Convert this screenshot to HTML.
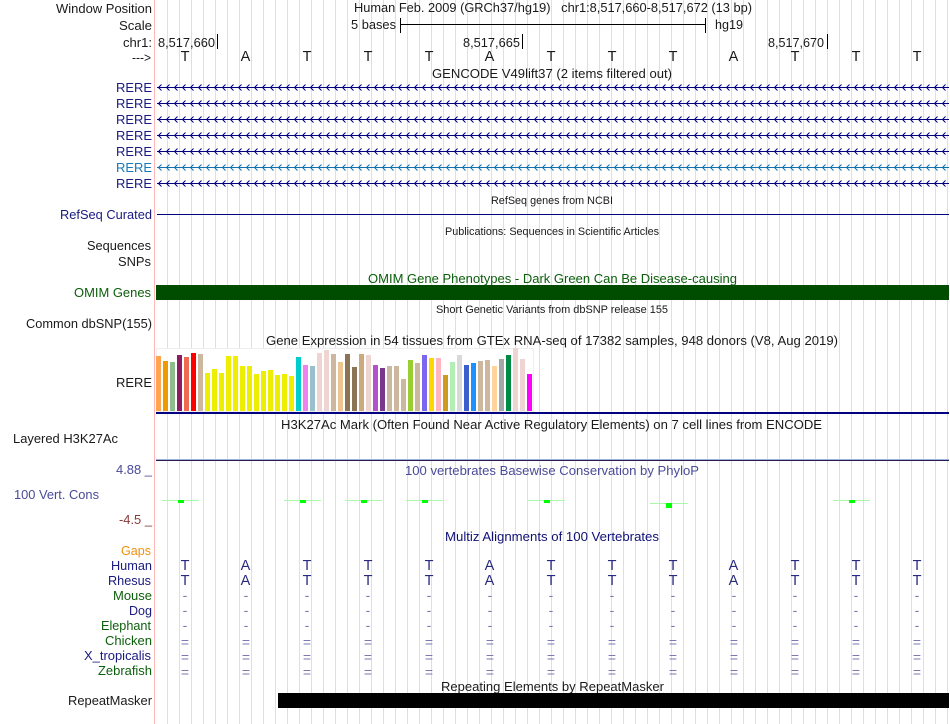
<!DOCTYPE html>
<html><head><meta charset="utf-8"><title>Genome Browser</title>
<style>
html,body{margin:0;padding:0;background:#fff;width:950px;height:724px;overflow:hidden;position:relative}
#grid{position:absolute;left:167px;top:0;width:783px;height:724px;background-image:linear-gradient(to right,#dcdcf5 1px,transparent 1px);background-size:12px 100%;background-repeat:repeat-x}
svg{display:block;position:absolute;left:0;top:0}
text{font-family:"Liberation Sans",sans-serif;font-size:13px;fill:#1a1a1a}
.s{font-size:11px}
.b{fill:#1a1a80}
.g{fill:#0b5e0b}
.l{font-size:14.5px;text-anchor:middle}
.n{font-size:14.5px;text-anchor:middle;fill:#2a2a80}
.d{font-size:14px;text-anchor:middle;fill:#7a7ab0}
</style></head><body>
<div id="grid"></div>
<svg width="950" height="724" viewBox="0 0 950 724" xmlns="http://www.w3.org/2000/svg">
<defs>
<pattern id="ch" x="158" y="84" width="8" height="16" patternUnits="userSpaceOnUse"><path d="M3.5 0.5L0.5 3.5L3.5 6.5" fill="none" stroke="#000080" stroke-width="1"/></pattern>
<pattern id="ch2" x="158" y="164" width="8" height="16" patternUnits="userSpaceOnUse"><path d="M3.5 0.5L0.5 3.5L3.5 6.5" fill="none" stroke="#1070b0" stroke-width="1"/></pattern>
</defs>
<rect x="154" y="0" width="1" height="724" fill="#ffb6b6"/>

<text x="56" y="13" textLength="96" lengthAdjust="spacingAndGlyphs">Window Position</text>
<text x="119" y="30" textLength="33" lengthAdjust="spacingAndGlyphs">Scale</text>
<text x="123" y="47" textLength="29" lengthAdjust="spacingAndGlyphs">chr1:</text>
<text x="132" y="62" textLength="19" lengthAdjust="spacingAndGlyphs">---&gt;</text>
<text x="354" y="12" xml:space="preserve" textLength="398" lengthAdjust="spacingAndGlyphs">Human Feb. 2009 (GRCh37/hg19)   chr1:8,517,660-8,517,672 (13 bp)</text>
<text x="351" y="29" textLength="45" lengthAdjust="spacingAndGlyphs">5 bases</text>
<text x="715" y="29" textLength="28" lengthAdjust="spacingAndGlyphs">hg19</text>
<rect x="400" y="24" width="306" height="1" fill="#000"/>
<rect x="400" y="18" width="1" height="15" fill="#000"/>
<rect x="705" y="18" width="1" height="15" fill="#000"/>
<text x="158" y="47" textLength="57" lengthAdjust="spacingAndGlyphs">8,517,660</text>
<rect x="217" y="34" width="1" height="15" fill="#000"/>
<text x="463" y="47" textLength="57" lengthAdjust="spacingAndGlyphs">8,517,665</text>
<rect x="522" y="34" width="1" height="15" fill="#000"/>
<text x="768" y="47" textLength="56" lengthAdjust="spacingAndGlyphs">8,517,670</text>
<rect x="827" y="34" width="1" height="15" fill="#000"/>

<text class="l" x="185" y="61">T</text><text class="l" x="245.500" y="61">A</text><text class="l" x="307" y="61">T</text><text class="l" x="368" y="61">T</text><text class="l" x="429" y="61">T</text><text class="l" x="489.500" y="61">A</text><text class="l" x="551" y="61">T</text><text class="l" x="612" y="61">T</text><text class="l" x="673" y="61">T</text><text class="l" x="733.500" y="61">A</text><text class="l" x="795" y="61">T</text><text class="l" x="856" y="61">T</text><text class="l" x="917" y="61">T</text>

<text x="432" y="78" textLength="240" lengthAdjust="spacingAndGlyphs">GENCODE V49lift37 (2 items filtered out)</text>

<text class="b" x="116" y="92" textLength="36" lengthAdjust="spacingAndGlyphs">RERE</text>
<text class="b" x="116" y="108" textLength="36" lengthAdjust="spacingAndGlyphs">RERE</text>
<text class="b" x="116" y="124" textLength="36" lengthAdjust="spacingAndGlyphs">RERE</text>
<text class="b" x="116" y="140" textLength="36" lengthAdjust="spacingAndGlyphs">RERE</text>
<text class="b" x="116" y="156" textLength="36" lengthAdjust="spacingAndGlyphs">RERE</text>
<text x="116" y="172" textLength="36" lengthAdjust="spacingAndGlyphs" style="fill:#1878b8">RERE</text>
<text class="b" x="116" y="188" textLength="36" lengthAdjust="spacingAndGlyphs">RERE</text>

<rect x="157" y="87" width="792" height="1" fill="#000080"/>
<rect x="157" y="103" width="792" height="1" fill="#000080"/>
<rect x="157" y="119" width="792" height="1" fill="#000080"/>
<rect x="157" y="135" width="792" height="1" fill="#000080"/>
<rect x="157" y="151" width="792" height="1" fill="#000080"/>
<rect x="157" y="167" width="792" height="1" fill="#1070b0"/>
<rect x="157" y="183" width="792" height="1" fill="#000080"/>
<rect x="158" y="84" width="790" height="71" fill="url(#ch)"/>
<rect x="158" y="164" width="790" height="7" fill="url(#ch2)"/>
<rect x="158" y="180" width="790" height="7" fill="url(#ch)"/>

<text class="s" x="491" y="204" textLength="122" lengthAdjust="spacingAndGlyphs">RefSeq genes from NCBI</text>
<text class="b" x="60" y="219" textLength="92" lengthAdjust="spacingAndGlyphs">RefSeq Curated</text>
<rect x="157" y="214" width="792" height="1" fill="#000080"/>
<text class="s" x="445" y="235" textLength="214" lengthAdjust="spacingAndGlyphs">Publications: Sequences in Scientific Articles</text>
<text x="87" y="250" textLength="64" lengthAdjust="spacingAndGlyphs">Sequences</text>
<text x="118" y="266" textLength="33" lengthAdjust="spacingAndGlyphs">SNPs</text>
<text class="g" x="368" y="283" textLength="369" lengthAdjust="spacingAndGlyphs">OMIM Gene Phenotypes - Dark Green Can Be Disease-causing</text>
<text class="g" x="74" y="297" textLength="77" lengthAdjust="spacingAndGlyphs">OMIM Genes</text>
<rect x="156" y="285" width="793" height="15" fill="#004d00"/>
<text class="s" x="436" y="313" textLength="232" lengthAdjust="spacingAndGlyphs">Short Genetic Variants from dbSNP release 155</text>
<text x="26" y="328" textLength="126" lengthAdjust="spacingAndGlyphs">Common dbSNP(155)</text>
<text x="266" y="345" textLength="572" lengthAdjust="spacingAndGlyphs">Gene Expression in 54 tissues from GTEx RNA-seq of 17382 samples, 948 donors (V8, Aug 2019)</text>
<text x="116" y="387" textLength="36" lengthAdjust="spacingAndGlyphs">RERE</text>

<rect x="156.500" y="348.500" width="377" height="63" fill="#fff" stroke="#eeeeee"/>
<g>
<rect x="156" y="356" width="5" height="55" fill="#FFA54F"/>
<rect x="163" y="361" width="5" height="50" fill="#EE9A00"/>
<rect x="170" y="362" width="5" height="49" fill="#8FBC8F"/>
<rect x="177" y="355" width="5" height="56" fill="#8B1C62"/>
<rect x="184" y="357" width="5" height="54" fill="#EE6A50"/>
<rect x="191" y="353" width="5" height="58" fill="#FF0000"/>
<rect x="198" y="354" width="5" height="57" fill="#CDB79E"/>
<rect x="205" y="373" width="5" height="38" fill="#EEEE00"/>
<rect x="212" y="369" width="5" height="42" fill="#EEEE00"/>
<rect x="219" y="373" width="5" height="38" fill="#EEEE00"/>
<rect x="226" y="356" width="5" height="55" fill="#EEEE00"/>
<rect x="233" y="356" width="5" height="55" fill="#EEEE00"/>
<rect x="240" y="366" width="5" height="45" fill="#EEEE00"/>
<rect x="247" y="366" width="5" height="45" fill="#EEEE00"/>
<rect x="254" y="374" width="5" height="37" fill="#EEEE00"/>
<rect x="261" y="371" width="5" height="40" fill="#EEEE00"/>
<rect x="268" y="370" width="5" height="41" fill="#EEEE00"/>
<rect x="275" y="375" width="5" height="36" fill="#EEEE00"/>
<rect x="282" y="374" width="5" height="37" fill="#EEEE00"/>
<rect x="289" y="376" width="5" height="35" fill="#EEEE00"/>
<rect x="296" y="357" width="5" height="54" fill="#00CDCD"/>
<rect x="303" y="365" width="5" height="46" fill="#EE82EE"/>
<rect x="310" y="366" width="5" height="45" fill="#9AC0CD"/>
<rect x="317" y="353" width="5" height="58" fill="#EED5D2"/>
<rect x="324" y="350" width="5" height="61" fill="#EED5D2"/>
<rect x="331" y="354" width="5" height="57" fill="#CDB79E"/>
<rect x="338" y="362" width="5" height="49" fill="#EEC591"/>
<rect x="345" y="354" width="5" height="57" fill="#8B7355"/>
<rect x="352" y="367" width="5" height="44" fill="#8B7355"/>
<rect x="359" y="354" width="5" height="57" fill="#CDAA7D"/>
<rect x="366" y="355" width="5" height="56" fill="#EED5D2"/>
<rect x="373" y="365" width="5" height="46" fill="#B452CD"/>
<rect x="380" y="368" width="5" height="43" fill="#7A378B"/>
<rect x="387" y="366" width="5" height="45" fill="#CDB79E"/>
<rect x="394" y="366" width="5" height="45" fill="#CDB79E"/>
<rect x="401" y="379" width="5" height="32" fill="#CDB79E"/>
<rect x="408" y="360" width="5" height="51" fill="#9ACD32"/>
<rect x="415" y="363" width="5" height="48" fill="#CDB79E"/>
<rect x="422" y="355" width="5" height="56" fill="#7A67EE"/>
<rect x="429" y="358" width="5" height="53" fill="#FFD700"/>
<rect x="436" y="358" width="5" height="53" fill="#FFB6C1"/>
<rect x="443" y="375" width="5" height="36" fill="#CD9B1D"/>
<rect x="450" y="362" width="5" height="49" fill="#B4EEB4"/>
<rect x="457" y="355" width="5" height="56" fill="#D9D9D9"/>
<rect x="464" y="365" width="5" height="46" fill="#3A5FCD"/>
<rect x="471" y="363" width="5" height="48" fill="#1E90FF"/>
<rect x="478" y="361" width="5" height="50" fill="#CDB79E"/>
<rect x="485" y="360" width="5" height="51" fill="#CDB79E"/>
<rect x="492" y="366" width="5" height="45" fill="#FFD39B"/>
<rect x="499" y="359" width="5" height="52" fill="#A6A6A6"/>
<rect x="506" y="355" width="5" height="56" fill="#008B45"/>
<rect x="513" y="348" width="5" height="63" fill="#EED5D2"/>
<rect x="520" y="359" width="5" height="52" fill="#EED5D2"/>
<rect x="527" y="374" width="5" height="37" fill="#FF00FF"/>
</g>
<rect x="156" y="412" width="793" height="2" fill="#000080"/>

<text x="281" y="429" textLength="541" lengthAdjust="spacingAndGlyphs">H3K27Ac Mark (Often Found Near Active Regulatory Elements) on 7 cell lines from ENCODE</text>
<text x="13" y="443" textLength="105" lengthAdjust="spacingAndGlyphs">Layered H3K27Ac</text>
<rect x="156" y="459" width="793" height="1" fill="#9ab4dc"/>
<rect x="156" y="460" width="793" height="1" fill="#2d1b4e"/>

<text x="116" y="474" textLength="36" lengthAdjust="spacingAndGlyphs" style="fill:#4a4a98">4.88 _</text>
<text x="405" y="475" textLength="294" lengthAdjust="spacingAndGlyphs" style="fill:#4a4a98">100 vertebrates Basewise Conservation by PhyloP</text>
<text x="14" y="499" textLength="85" lengthAdjust="spacingAndGlyphs" style="fill:#4a4a98">100 Vert. Cons</text>
<text x="119" y="524" textLength="33" lengthAdjust="spacingAndGlyphs" style="fill:#8b3a3a">-4.5 _</text>

<g fill="#aaf8aa">
<rect x="162" y="500" width="37" height="1"/>
<rect x="284" y="500" width="37" height="1"/>
<rect x="345" y="500" width="37" height="1"/>
<rect x="406" y="500" width="37" height="1"/>
<rect x="528" y="500" width="37" height="1"/>
<rect x="650" y="503" width="38" height="1"/>
<rect x="833" y="500" width="37" height="1"/>
</g>
<g fill="#00ff00">
<rect x="178" y="500" width="6" height="3"/>
<rect x="300" y="500" width="6" height="3"/>
<rect x="361" y="500" width="6" height="3"/>
<rect x="422" y="500" width="6" height="3"/>
<rect x="544" y="500" width="6" height="3"/>
<rect x="666" y="503" width="6" height="5"/>
<rect x="849" y="500" width="6" height="3"/>
</g>

<text x="445" y="541" textLength="214" lengthAdjust="spacingAndGlyphs" style="fill:#101078">Multiz Alignments of 100 Vertebrates</text>
<text x="121" y="555" textLength="30" lengthAdjust="spacingAndGlyphs" style="fill:#f29010">Gaps</text>
<text class="b" x="111" y="570" textLength="41" lengthAdjust="spacingAndGlyphs">Human</text>
<text class="b" x="108" y="585" textLength="43" lengthAdjust="spacingAndGlyphs">Rhesus</text>
<text class="g" x="113" y="600" textLength="39" lengthAdjust="spacingAndGlyphs">Mouse</text>
<text class="b" x="129" y="615" textLength="23" lengthAdjust="spacingAndGlyphs">Dog</text>
<text class="g" x="101" y="630" textLength="50" lengthAdjust="spacingAndGlyphs">Elephant</text>
<text class="g" x="105" y="645" textLength="47" lengthAdjust="spacingAndGlyphs">Chicken</text>
<text class="b" x="84" y="660" textLength="67" lengthAdjust="spacingAndGlyphs">X_tropicalis</text>
<text class="g" x="98" y="675" textLength="54" lengthAdjust="spacingAndGlyphs">Zebrafish</text>

<text class="n" x="185" y="570">T</text><text class="n" x="245.500" y="570">A</text><text class="n" x="307" y="570">T</text><text class="n" x="368" y="570">T</text><text class="n" x="429" y="570">T</text><text class="n" x="489.500" y="570">A</text><text class="n" x="551" y="570">T</text><text class="n" x="612" y="570">T</text><text class="n" x="673" y="570">T</text><text class="n" x="733.500" y="570">A</text><text class="n" x="795" y="570">T</text><text class="n" x="856" y="570">T</text><text class="n" x="917" y="570">T</text>
<text class="n" x="185" y="585">T</text><text class="n" x="245.500" y="585">A</text><text class="n" x="307" y="585">T</text><text class="n" x="368" y="585">T</text><text class="n" x="429" y="585">T</text><text class="n" x="489.500" y="585">A</text><text class="n" x="551" y="585">T</text><text class="n" x="612" y="585">T</text><text class="n" x="673" y="585">T</text><text class="n" x="733.500" y="585">A</text><text class="n" x="795" y="585">T</text><text class="n" x="856" y="585">T</text><text class="n" x="917" y="585">T</text>

<text class="d" x="185" y="600">-</text><text class="d" x="246" y="600">-</text><text class="d" x="307" y="600">-</text><text class="d" x="368" y="600">-</text><text class="d" x="429" y="600">-</text><text class="d" x="490" y="600">-</text><text class="d" x="551" y="600">-</text><text class="d" x="612" y="600">-</text><text class="d" x="673" y="600">-</text><text class="d" x="734" y="600">-</text><text class="d" x="795" y="600">-</text><text class="d" x="856" y="600">-</text><text class="d" x="917" y="600">-</text>
<text class="d" x="185" y="615">-</text><text class="d" x="246" y="615">-</text><text class="d" x="307" y="615">-</text><text class="d" x="368" y="615">-</text><text class="d" x="429" y="615">-</text><text class="d" x="490" y="615">-</text><text class="d" x="551" y="615">-</text><text class="d" x="612" y="615">-</text><text class="d" x="673" y="615">-</text><text class="d" x="734" y="615">-</text><text class="d" x="795" y="615">-</text><text class="d" x="856" y="615">-</text><text class="d" x="917" y="615">-</text>
<text class="d" x="185" y="630">-</text><text class="d" x="246" y="630">-</text><text class="d" x="307" y="630">-</text><text class="d" x="368" y="630">-</text><text class="d" x="429" y="630">-</text><text class="d" x="490" y="630">-</text><text class="d" x="551" y="630">-</text><text class="d" x="612" y="630">-</text><text class="d" x="673" y="630">-</text><text class="d" x="734" y="630">-</text><text class="d" x="795" y="630">-</text><text class="d" x="856" y="630">-</text><text class="d" x="917" y="630">-</text>
<text class="d" x="185" y="647">=</text><text class="d" x="246" y="647">=</text><text class="d" x="307" y="647">=</text><text class="d" x="368" y="647">=</text><text class="d" x="429" y="647">=</text><text class="d" x="490" y="647">=</text><text class="d" x="551" y="647">=</text><text class="d" x="612" y="647">=</text><text class="d" x="673" y="647">=</text><text class="d" x="734" y="647">=</text><text class="d" x="795" y="647">=</text><text class="d" x="856" y="647">=</text><text class="d" x="917" y="647">=</text>
<text class="d" x="185" y="662">=</text><text class="d" x="246" y="662">=</text><text class="d" x="307" y="662">=</text><text class="d" x="368" y="662">=</text><text class="d" x="429" y="662">=</text><text class="d" x="490" y="662">=</text><text class="d" x="551" y="662">=</text><text class="d" x="612" y="662">=</text><text class="d" x="673" y="662">=</text><text class="d" x="734" y="662">=</text><text class="d" x="795" y="662">=</text><text class="d" x="856" y="662">=</text><text class="d" x="917" y="662">=</text>
<text class="d" x="185" y="677">=</text><text class="d" x="246" y="677">=</text><text class="d" x="307" y="677">=</text><text class="d" x="368" y="677">=</text><text class="d" x="429" y="677">=</text><text class="d" x="490" y="677">=</text><text class="d" x="551" y="677">=</text><text class="d" x="612" y="677">=</text><text class="d" x="673" y="677">=</text><text class="d" x="734" y="677">=</text><text class="d" x="795" y="677">=</text><text class="d" x="856" y="677">=</text><text class="d" x="917" y="677">=</text>

<text x="441" y="691" textLength="223" lengthAdjust="spacingAndGlyphs">Repeating Elements by RepeatMasker</text>
<text x="68" y="705" textLength="84" lengthAdjust="spacingAndGlyphs">RepeatMasker</text>
<rect x="278" y="693" width="671" height="15" fill="#000"/>
</svg>
</body></html>
